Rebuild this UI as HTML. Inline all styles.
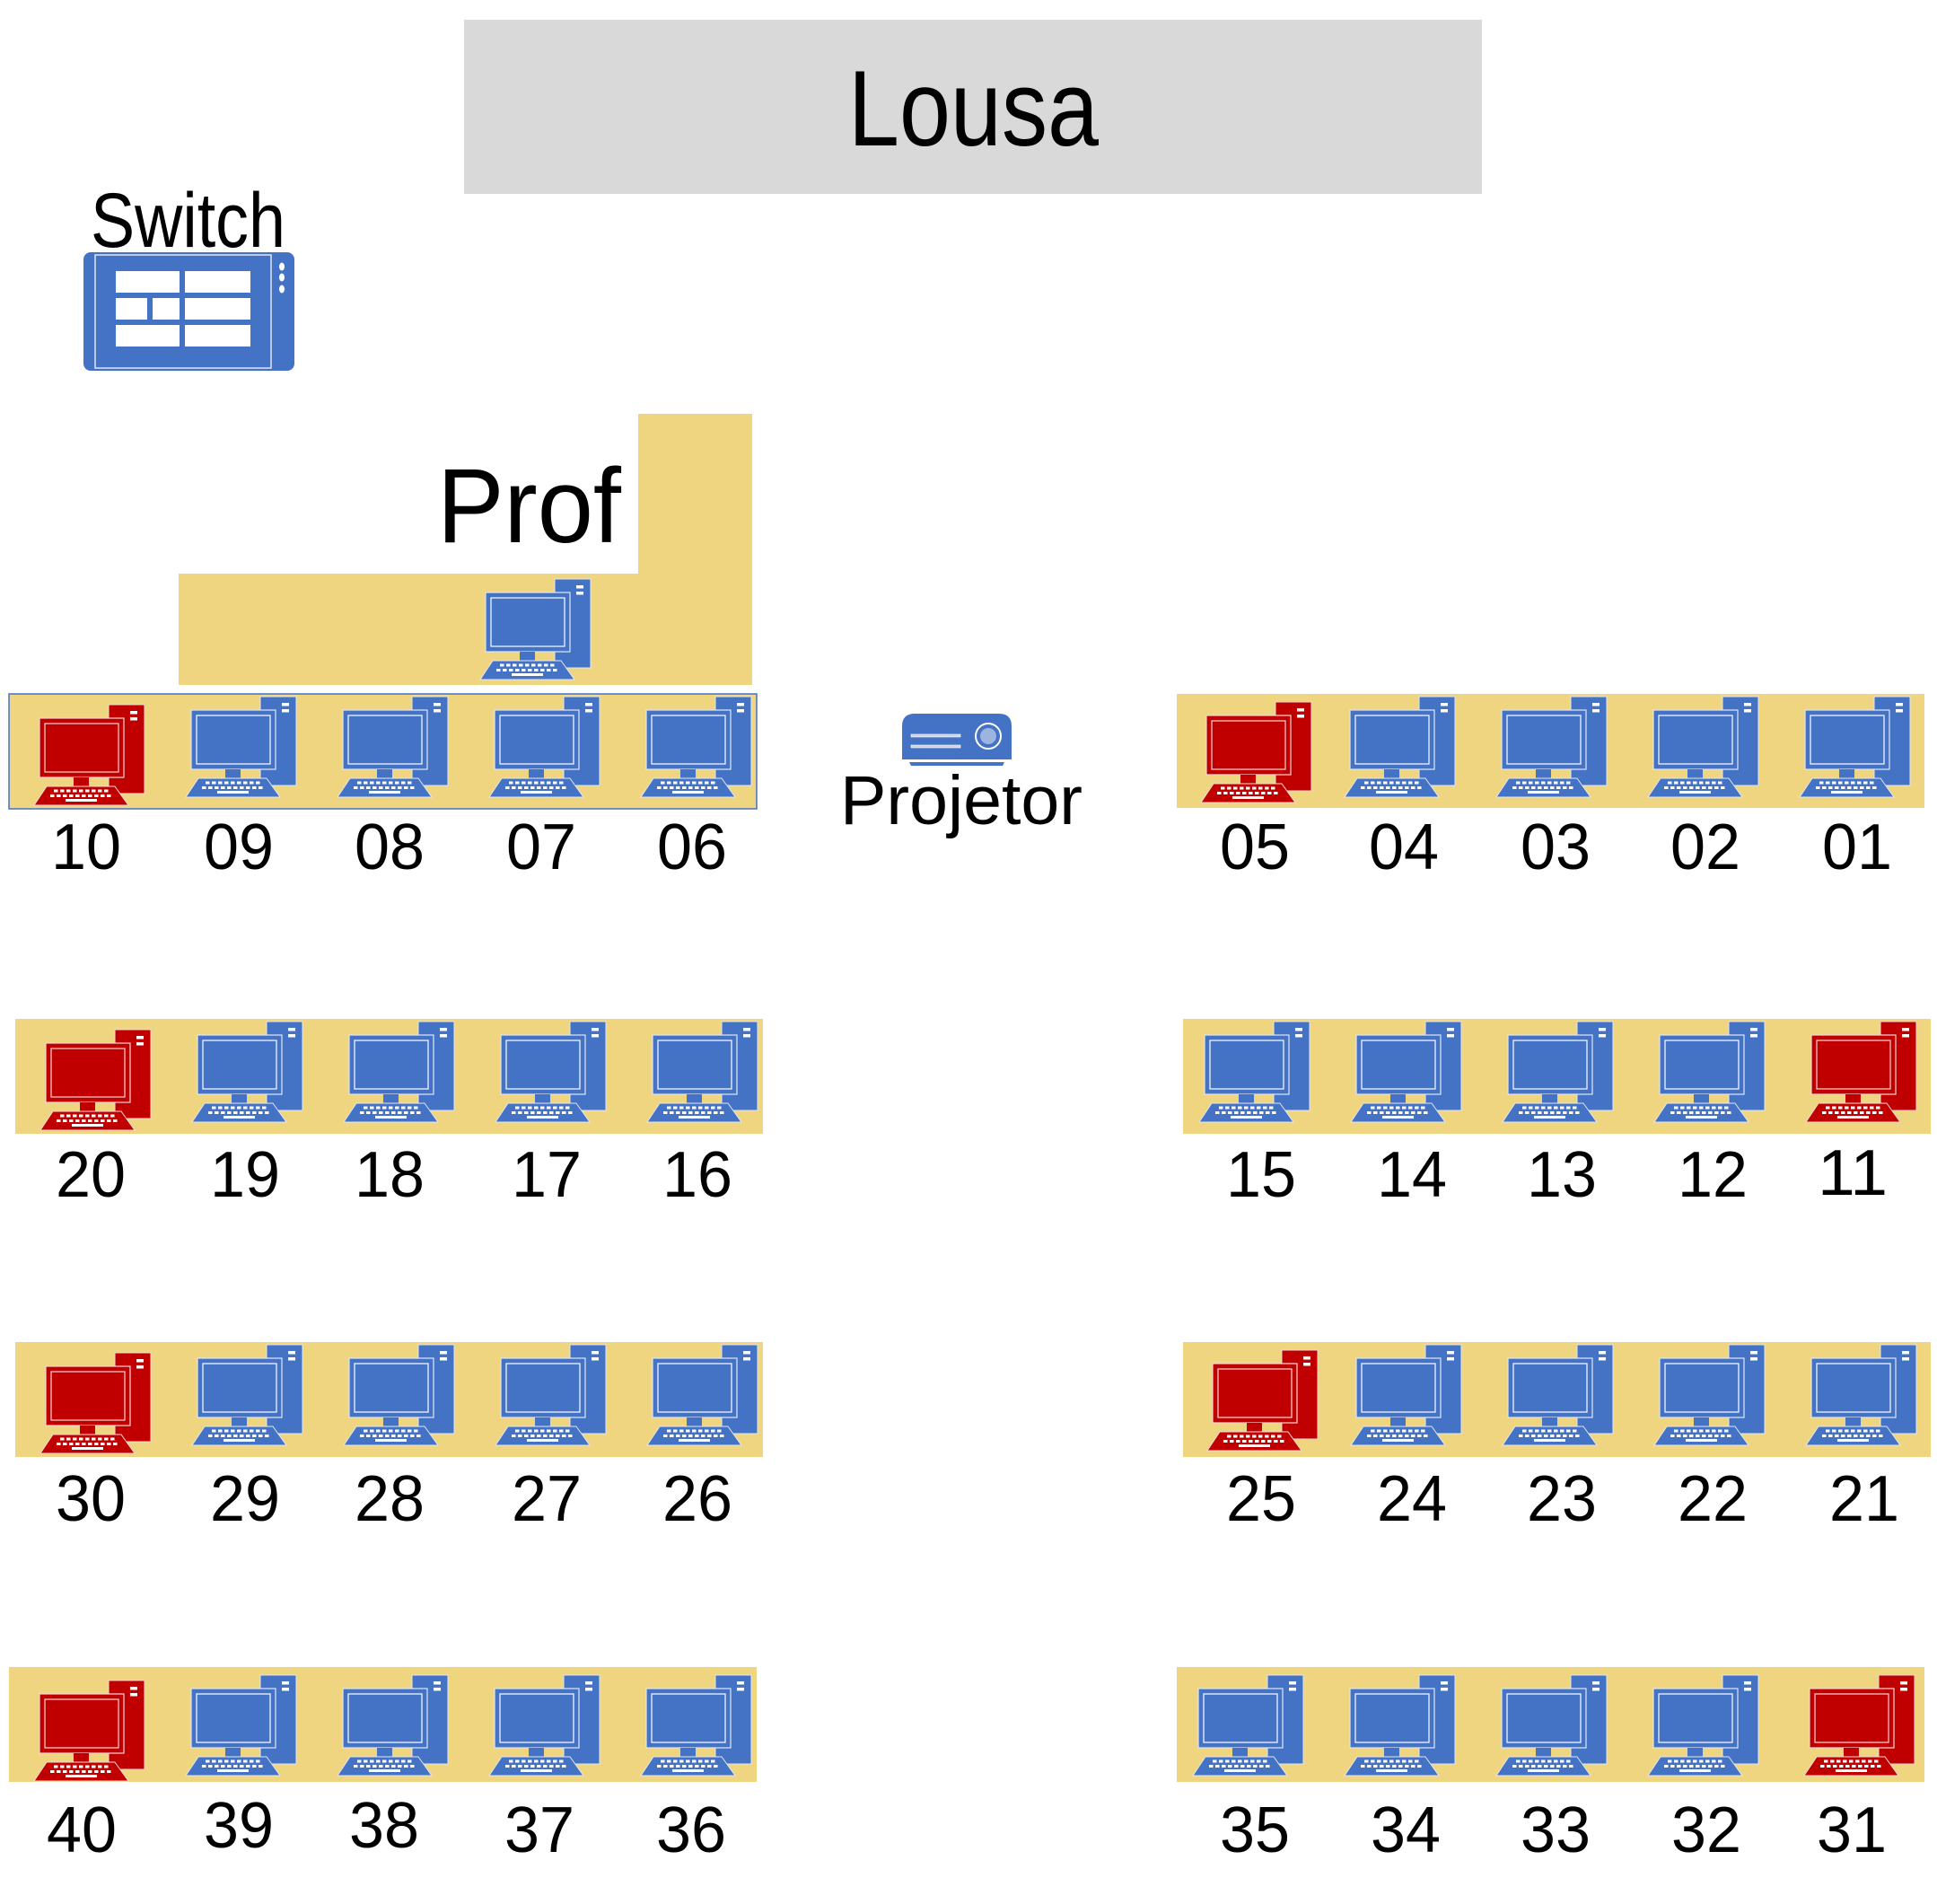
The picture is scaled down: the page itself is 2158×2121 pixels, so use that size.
<!DOCTYPE html>
<html><head><meta charset="utf-8"><style>
html,body{margin:0;padding:0;background:#fff;}
svg{display:block;}
text{font-family:"Liberation Sans",sans-serif;fill:#000;}
</style></head><body>
<svg width="2158" height="2121" viewBox="0 0 2158 2121" xmlns="http://www.w3.org/2000/svg">
<defs>
<g id="pcb">
<rect x="83" y="0" width="40" height="99" fill="#4472C4" stroke="#dfe6f5" stroke-width="1"/>
<rect x="107" y="7" width="8" height="3.5" fill="#fff"/>
<rect x="107" y="14" width="8" height="3.5" fill="#fff"/>
<rect x="6" y="15" width="94" height="66" fill="#4472C4" stroke="#dfe6f5" stroke-width="1.2"/>
<rect x="12" y="21" width="82" height="54" fill="none" stroke="#fff" stroke-width="1.2"/>
<rect x="44" y="81" width="17" height="11" fill="#4472C4"/>
<polygon points="14,91 90,91 105,112 0,112" fill="#4472C4" stroke="#dfe6f5" stroke-width="1"/>
<line x1="22" y1="96" x2="84" y2="96" stroke="#fff" stroke-width="3" stroke-dasharray="4.5 2.5"/>
<line x1="18" y1="101.5" x2="88" y2="101.5" stroke="#fff" stroke-width="3" stroke-dasharray="4.5 2.5"/>
<rect x="35" y="105" width="35" height="3" fill="#fff"/>
</g>
<g id="pcr">
<rect x="83" y="0" width="40" height="99" fill="#C00000" stroke="#f3d6d6" stroke-width="1"/>
<rect x="107" y="7" width="8" height="3.5" fill="#fff"/>
<rect x="107" y="14" width="8" height="3.5" fill="#fff"/>
<rect x="6" y="15" width="94" height="66" fill="#C00000" stroke="#f3d6d6" stroke-width="1.2"/>
<rect x="12" y="21" width="82" height="54" fill="none" stroke="#f3d6d6" stroke-width="1.2"/>
<rect x="44" y="81" width="17" height="11" fill="#C00000"/>
<polygon points="14,91 90,91 105,112 0,112" fill="#C00000" stroke="#f3d6d6" stroke-width="1"/>
<line x1="22" y1="96" x2="84" y2="96" stroke="#fff" stroke-width="3" stroke-dasharray="4.5 2.5"/>
<line x1="18" y1="101.5" x2="88" y2="101.5" stroke="#fff" stroke-width="3" stroke-dasharray="4.5 2.5"/>
<rect x="35" y="105" width="35" height="3" fill="#fff"/>
</g>
</defs>

<rect x="517" y="22" width="1134" height="194" fill="#D9D9D9"/>
<text x="945" y="162" font-size="120" textLength="279" lengthAdjust="spacingAndGlyphs">Lousa</text>

<text x="101" y="275" font-size="86" textLength="217" lengthAdjust="spacingAndGlyphs">Switch</text>
<g transform="translate(93,281)">
<rect x="0" y="0" width="235" height="132" rx="8" fill="#4472C4"/>
<rect x="13" y="3" width="196" height="126" fill="none" stroke="#dfe6f5" stroke-width="1.5"/>
<rect x="36" y="21" width="71" height="24" fill="#fff"/>
<rect x="113" y="21" width="73" height="24" fill="#fff"/>
<rect x="36" y="51" width="35" height="24" fill="#fff"/>
<rect x="77" y="51" width="30" height="24" fill="#fff"/>
<rect x="113" y="51" width="73" height="24" fill="#fff"/>
<rect x="36" y="81" width="71" height="24" fill="#fff"/>
<rect x="113" y="81" width="73" height="24" fill="#fff"/>
<ellipse cx="221" cy="16" rx="3" ry="4.5" fill="#fff"/>
<ellipse cx="221" cy="28" rx="3" ry="4.5" fill="#fff"/>
<ellipse cx="221" cy="41" rx="3" ry="4.5" fill="#fff"/>
</g>

<rect x="711" y="461" width="127" height="302" fill="#F0D580"/>
<rect x="199" y="639" width="639" height="124" fill="#F0D580"/>
<text x="487" y="604" font-size="118" textLength="205" lengthAdjust="spacingAndGlyphs">Prof</text>
<use href="#pcb" x="535" y="645"/>

<g transform="translate(1005,795)">
<path d="M0,51 L0,14 Q0,0 14,0 L108,0 Q122,0 122,14 L122,51 Z" fill="#4472C4"/>
<rect x="10" y="23" width="55" height="3" fill="#c8d4ee" stroke="#fff" stroke-width="0.6"/>
<rect x="10" y="35" width="55" height="3" fill="#c8d4ee" stroke="#fff" stroke-width="0.6"/>
<circle cx="96" cy="25" r="14" fill="#4472C4" stroke="#fff" stroke-width="2"/>
<circle cx="96" cy="25" r="9" fill="#9DB3E0"/>
<polygon points="8,54 114,54 112,58 10,58" fill="#4472C4"/>
</g>
<text x="936" y="918" font-size="77" textLength="270" lengthAdjust="spacingAndGlyphs">Projetor</text>

<rect x="10" y="773" width="833" height="128" fill="#F0D580" stroke="#4472C4" stroke-width="1.5"/>
<use href="#pcr" x="38" y="785"/><use href="#pcb" x="207" y="776"/><use href="#pcb" x="376" y="776"/><use href="#pcb" x="545" y="776"/><use href="#pcb" x="714" y="776"/>
<g font-size="72" text-anchor="middle">
<text x="96" y="968" textLength="78" lengthAdjust="spacingAndGlyphs">10</text>
<text x="266" y="968" textLength="78" lengthAdjust="spacingAndGlyphs">09</text>
<text x="434" y="968" textLength="78" lengthAdjust="spacingAndGlyphs">08</text>
<text x="603" y="968" textLength="78" lengthAdjust="spacingAndGlyphs">07</text>
<text x="771" y="968" textLength="78" lengthAdjust="spacingAndGlyphs">06</text>
</g>
<rect x="1311" y="773" width="833" height="127" fill="#F0D580"/>
<use href="#pcr" x="1338" y="782"/><use href="#pcb" x="1498" y="776"/><use href="#pcb" x="1667" y="776"/><use href="#pcb" x="1836" y="776"/><use href="#pcb" x="2005" y="776"/>
<g font-size="72" text-anchor="middle">
<text x="1398" y="968" textLength="78" lengthAdjust="spacingAndGlyphs">05</text>
<text x="1564" y="968" textLength="78" lengthAdjust="spacingAndGlyphs">04</text>
<text x="1733" y="968" textLength="78" lengthAdjust="spacingAndGlyphs">03</text>
<text x="1900" y="968" textLength="78" lengthAdjust="spacingAndGlyphs">02</text>
<text x="2069" y="968" textLength="78" lengthAdjust="spacingAndGlyphs">01</text>
</g>

<rect x="17" y="1135" width="833" height="128" fill="#F0D580"/>
<use href="#pcr" x="45" y="1147"/><use href="#pcb" x="214" y="1138"/><use href="#pcb" x="383" y="1138"/><use href="#pcb" x="552" y="1138"/><use href="#pcb" x="721" y="1138"/>
<g font-size="72" text-anchor="middle">
<text x="101" y="1333" textLength="78" lengthAdjust="spacingAndGlyphs">20</text>
<text x="273" y="1333" textLength="78" lengthAdjust="spacingAndGlyphs">19</text>
<text x="434" y="1333" textLength="78" lengthAdjust="spacingAndGlyphs">18</text>
<text x="609" y="1333" textLength="78" lengthAdjust="spacingAndGlyphs">17</text>
<text x="777" y="1333" textLength="78" lengthAdjust="spacingAndGlyphs">16</text>
</g>
<rect x="1318" y="1135" width="833" height="128" fill="#F0D580"/>
<use href="#pcb" x="1336" y="1138"/><use href="#pcb" x="1505" y="1138"/><use href="#pcb" x="1674" y="1138"/><use href="#pcb" x="1843" y="1138"/><use href="#pcr" x="2012" y="1138"/>
<g font-size="72" text-anchor="middle">
<text x="1405" y="1333" textLength="78" lengthAdjust="spacingAndGlyphs">15</text>
<text x="1573" y="1333" textLength="78" lengthAdjust="spacingAndGlyphs">14</text>
<text x="1740" y="1333" textLength="78" lengthAdjust="spacingAndGlyphs">13</text>
<text x="1908" y="1333" textLength="78" lengthAdjust="spacingAndGlyphs">12</text>
<text x="2064" y="1331" textLength="78" lengthAdjust="spacingAndGlyphs">11</text>
</g>

<rect x="17" y="1495" width="833" height="128" fill="#F0D580"/>
<use href="#pcr" x="45" y="1507"/><use href="#pcb" x="214" y="1498"/><use href="#pcb" x="383" y="1498"/><use href="#pcb" x="552" y="1498"/><use href="#pcb" x="721" y="1498"/>
<g font-size="72" text-anchor="middle">
<text x="101" y="1694" textLength="78" lengthAdjust="spacingAndGlyphs">30</text>
<text x="273" y="1694" textLength="78" lengthAdjust="spacingAndGlyphs">29</text>
<text x="434" y="1694" textLength="78" lengthAdjust="spacingAndGlyphs">28</text>
<text x="609" y="1694" textLength="78" lengthAdjust="spacingAndGlyphs">27</text>
<text x="777" y="1694" textLength="78" lengthAdjust="spacingAndGlyphs">26</text>
</g>
<rect x="1318" y="1495" width="833" height="128" fill="#F0D580"/>
<use href="#pcr" x="1345" y="1504"/><use href="#pcb" x="1505" y="1498"/><use href="#pcb" x="1674" y="1498"/><use href="#pcb" x="1843" y="1498"/><use href="#pcb" x="2012" y="1498"/>
<g font-size="72" text-anchor="middle">
<text x="1405" y="1694" textLength="78" lengthAdjust="spacingAndGlyphs">25</text>
<text x="1573" y="1694" textLength="78" lengthAdjust="spacingAndGlyphs">24</text>
<text x="1740" y="1694" textLength="78" lengthAdjust="spacingAndGlyphs">23</text>
<text x="1908" y="1694" textLength="78" lengthAdjust="spacingAndGlyphs">22</text>
<text x="2077" y="1694" textLength="78" lengthAdjust="spacingAndGlyphs">21</text>
</g>

<rect x="10" y="1857" width="833" height="128" fill="#F0D580"/>
<use href="#pcr" x="38" y="1872"/><use href="#pcb" x="207" y="1866"/><use href="#pcb" x="376" y="1866"/><use href="#pcb" x="545" y="1866"/><use href="#pcb" x="714" y="1866"/>
<g font-size="72" text-anchor="middle">
<text x="91" y="2063" textLength="78" lengthAdjust="spacingAndGlyphs">40</text>
<text x="266" y="2058" textLength="78" lengthAdjust="spacingAndGlyphs">39</text>
<text x="428" y="2058" textLength="78" lengthAdjust="spacingAndGlyphs">38</text>
<text x="601" y="2063" textLength="78" lengthAdjust="spacingAndGlyphs">37</text>
<text x="770" y="2063" textLength="78" lengthAdjust="spacingAndGlyphs">36</text>
</g>
<rect x="1311" y="1857" width="833" height="128" fill="#F0D580"/>
<use href="#pcb" x="1329" y="1866"/><use href="#pcb" x="1498" y="1866"/><use href="#pcb" x="1667" y="1866"/><use href="#pcb" x="1836" y="1866"/><use href="#pcr" x="2010" y="1866"/>
<g font-size="72" text-anchor="middle">
<text x="1398" y="2063" textLength="78" lengthAdjust="spacingAndGlyphs">35</text>
<text x="1566" y="2063" textLength="78" lengthAdjust="spacingAndGlyphs">34</text>
<text x="1733" y="2063" textLength="78" lengthAdjust="spacingAndGlyphs">33</text>
<text x="1901" y="2063" textLength="78" lengthAdjust="spacingAndGlyphs">32</text>
<text x="2063" y="2063" textLength="78" lengthAdjust="spacingAndGlyphs">31</text>
</g>
</svg>
</body></html>
